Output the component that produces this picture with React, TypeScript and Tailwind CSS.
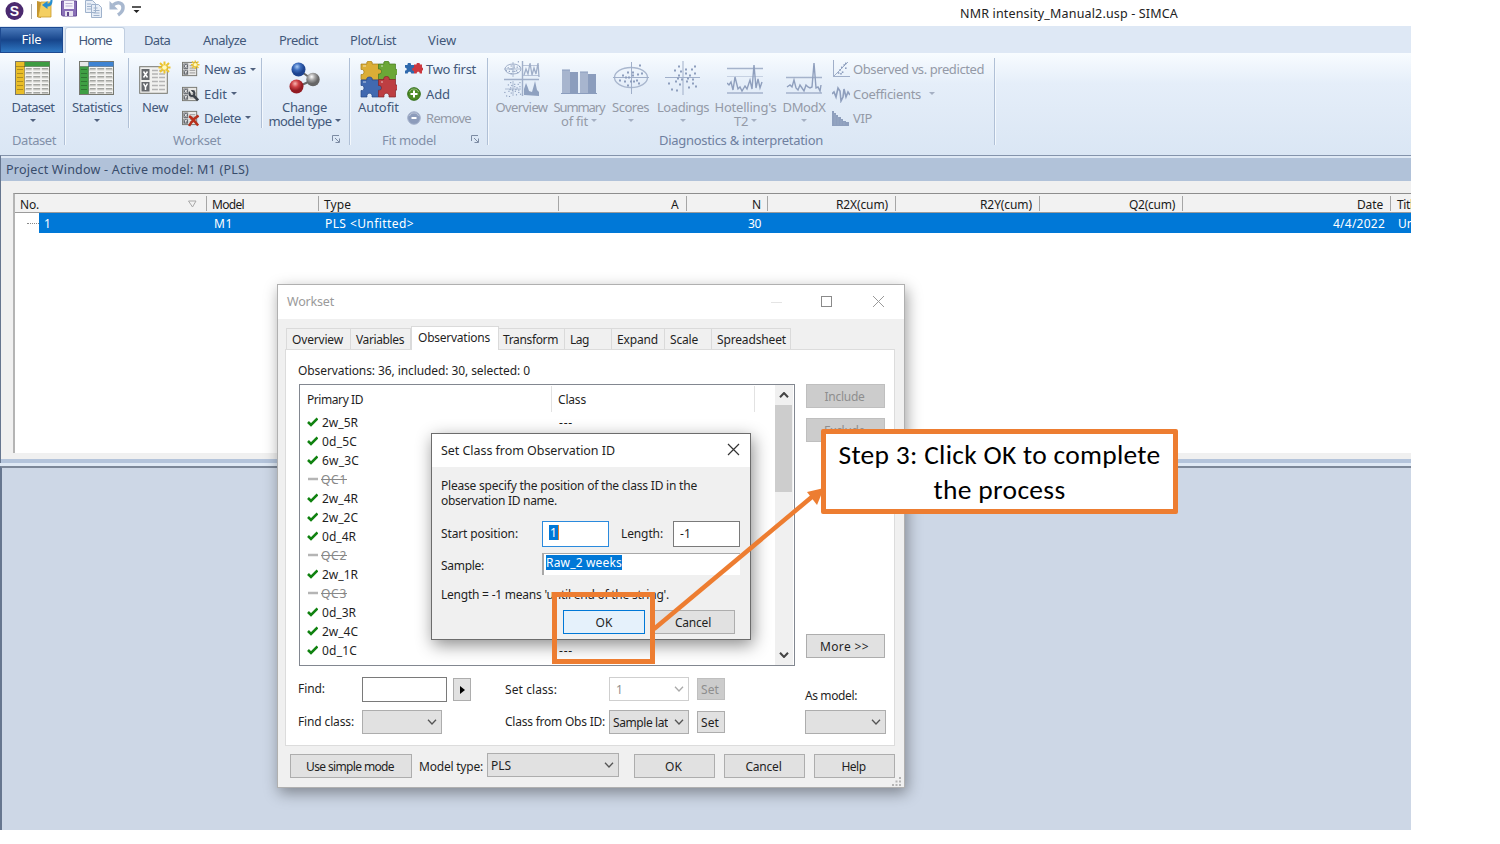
import { useLayoutEffect, useRef, useState } from "react";
import type { ReactNode } from "react";

/* One line of text whose tracking is adjusted to span `w` pixels. */
function T({ w, className = "", children }: { w: number; className?: string; children: string }) {
  const ref = useRef<HTMLSpanElement>(null);
  const [spacing, setSpacing] = useState(0);
  useLayoutEffect(() => {
    const el = ref.current!;
    el.style.letterSpacing = "0px";
    const natural = el.getBoundingClientRect().width;
    const next = (w - natural) / Math.max(1, children.length);
    el.style.letterSpacing = next + "px";
    setSpacing(next);
  }, [w, children]);
  return (
    <span ref={ref} className={"inline-block shrink-0 pt-[2px] whitespace-nowrap " + className} style={{ letterSpacing: spacing }}>
      {children}
    </span>
  );
}

/* ---------- ribbon icons ---------- */

function TableIcon({ side, top, corner }: { side: string; top: string; corner: string }) {
  return (
    <svg width="36" height="35" viewBox="0 0 36 35">
      <rect x="0.5" y="0.5" width="34" height="33" fill="#dcdcd8" stroke="#77786f" />
      {[6, 10, 14, 18, 22, 26, 30].map((y) => (
        <g key={y}>
          <path d={`M10 ${y + 0.5}H34`} stroke="#f7f7f5" strokeWidth="1.6" />
          <path d={`M11 ${y + 1.7}H33`} stroke="#a0a29e" strokeWidth="1.3" />
        </g>
      ))}
      <path d="M17.5 5V33M26 5V33" stroke="#f2f2f0" strokeWidth="1.6" />
      <rect x="1" y="1" width="8.5" height="32" fill={side} />
      <rect x="9.5" y="1" width="25" height="4.5" fill={top} />
      <rect x="1" y="1" width="8.5" height="4.5" fill={corner} />
      {[8, 12, 16, 20, 24, 28].map((y) => (
        <path key={y} d={`M2 ${y + 0.5}H8`} stroke="#00000040" />
      ))}
      <path d="M9.5 1V33M1 5.5H34" stroke="#00000040" />
    </svg>
  );
}

function Spark({ x, y, r }: { x: number; y: number; r: number }) {
  return (
    <g transform={`translate(${x} ${y}) scale(${r / 6})`}>
      <path d="M0-6V6M-6 0H6M-4.5-4.5L4.5 4.5M4.5-4.5L-4.5 4.5" stroke="#edc52e" strokeWidth="2" />
      <circle r="2.3" fill="#fff9bd" />
    </g>
  );
}

function NewIcon() {
  return (
    <svg width="32" height="34" viewBox="0 0 32 34">
      <rect x="0.7" y="5.7" width="27.6" height="26.6" fill="#f1f1ef" stroke="#77776f" />
      <rect x="2.5" y="8" width="8" height="11" fill="#66696d" />
      <rect x="2.5" y="21" width="8" height="9.5" fill="#66696d" />
      <path d="M4.5 10.5l4 6M8.5 10.5l-4 6M4.5 22.5l2 3.5 2-3.5M6.5 26v3" stroke="#fff" strokeWidth="1.5" fill="none" />
      <path d="M13 9.5H26M13 13H26M13 16.5H26M13 20.5H26M13 24.5H26M13 28.5H26" stroke="#b4b4b4" strokeWidth="1.7" />
      <path d="M19.5 7V31" stroke="#f1f1ef" strokeWidth="1.2" />
      <Spark x={25.5} y={6.5} r={6} />
    </svg>
  );
}

function MiniSheet({ kind }: { kind: "new" | "edit" | "delete" }) {
  return (
    <svg width="19" height="18" viewBox="0 0 19 18">
      <rect x="0.5" y="2" width="15" height="14" fill="#e9e9e7" stroke="#777770" />
      <rect x="1.5" y="3.200" width="5" height="5.700" fill="#65696f" />
      <rect x="1.5" y="9.700" width="5" height="5.300" fill="#65696f" />
      <path d="M2.800 4.300l2.500 3.500M5.300 4.300L2.800 7.800M2.800 10.500l1.200 2 1.300-2M4 12v2" stroke="#fff" strokeWidth="0.9" fill="none" />
      <path d="M8 5.5h6M8 8h6M8 10.5h6M8 13h6" stroke="#aaa" strokeWidth="1.3" />
      {kind === "new" && <Spark x={14} y={4.5} r={4.500} />}
      {kind === "edit" && (
        <g fill="none" stroke="#3d434b">
          <circle cx="10.500" cy="8.5" r="2.6" strokeWidth="2.2" />
          <path d="M12.200 10.600l4.800 5.200" strokeWidth="2.8" />
          <path d="M8 5l2.600 3" stroke="#e9e9e7" strokeWidth="2" />
        </g>
      )}
      {kind === "delete" && <path d="M7.500 7c3 2 6.500 6 9.500 10M17.500 6.500c-4 2.500-7.500 6-10 11" stroke="#b8301c" strokeWidth="2.600" fill="none" />}
    </svg>
  );
}

function MoleculeIcon() {
  return (
    <svg width="34" height="34" viewBox="0 0 34 34">
      <defs>
        <radialGradient id="mb" cx="0.4" cy="0.3"><stop offset="0" stopColor="#a9cbf5" /><stop offset="0.5" stopColor="#3d6dbd" /><stop offset="1" stopColor="#1d438f" /></radialGradient>
        <radialGradient id="mr" cx="0.4" cy="0.3"><stop offset="0" stopColor="#f7b5b1" /><stop offset="0.5" stopColor="#cf4246" /><stop offset="1" stopColor="#921b22" /></radialGradient>
        <radialGradient id="mg" cx="0.4" cy="0.3"><stop offset="0" stopColor="#fff" /><stop offset="0.5" stopColor="#a5a5a5" /><stop offset="1" stopColor="#666" /></radialGradient>
      </defs>
      <path d="M11 9l14 10M9 26l16-7" stroke="#666" strokeWidth="2" />
      <circle cx="10.500" cy="8.500" r="7" fill="url(#mb)" />
      <circle cx="8.500" cy="25.500" r="7" fill="url(#mr)" />
      <circle cx="25" cy="18.500" r="6.700" fill="url(#mg)" />
    </svg>
  );
}

function PuzzleIcon() {
  return (
    <svg width="37" height="37" viewBox="0 0 37 37">
      <path d="M1 3h6c-2-4 7-4 5 0h6.500v5c4-1 4 6 0 5v5.500H12c1 4-6 4-5 0H1v-5c4 1 4-6 0-5z" fill="#dbae37" stroke="#a47d1b" strokeWidth="0.7" />
      <path d="M18.500 3H24c-2-4 7-4 5 0h6.500v5.500c4-1 4 6 0 5v5H29c1 4-6 4-5 0h-5.500v-5.500c4 1 4-6 0-5z" fill="#6ba737" stroke="#45791e" strokeWidth="0.7" />
      <path d="M1 19h6c-2-4 7-4 5 0h6.500v5c4-1 4 6 0 5v7H12c1-5-6-5-5 0H1v-6.500c4 1 4-6 0-5z" fill="#4169b0" stroke="#254887" strokeWidth="0.7" />
      <path d="M18.500 18.500H24c-2-4 7-4 5 0h6.500V24c4-1 4 6 0 5v7H29c1-5-6-5-5 0h-5.500v-6.500c4 1 4-6 0-5z" fill="#bd3e42" stroke="#822327" strokeWidth="0.7" />
      <path d="M3 5h3M21 5h2M3 21h3M21 21h2" stroke="#ffffffaa" />
    </svg>
  );
}

function MiniPuzzle() {
  return (
    <svg width="18" height="12" viewBox="0 0 18 12">
      <path d="M0 2h2.500c-.7-3 4.200-3 3.500 0H9v8.500H6.200c.3-2.500-3.700-2.500-3.400 0H0V7.500c2.300 0 2.300-2.700 0-2.700z" fill="#2f69ad" />
      <path d="M9 1.500h2.500c-.3-2.500 3.700-2.500 3.400 0H17v3c2 .2 1.500 3 0 3v3h-2.300c.4-2.500-3.300-2.500-3 0H9V8C6.500 8 6.500 4.500 9 4.500z" fill="#cc383f" />
    </svg>
  );
}

function RoundSign({ minus }: { minus?: boolean }) {
  return (
    <svg width="14" height="14" viewBox="0 0 14 14">
      <circle cx="7" cy="7" r="6.300" fill={minus ? "#8d9cbb" : "#4c8b24"} stroke={minus ? "#a5b2cc" : "#2f6b16"} />
      <path d={minus ? "M4.500 7h5" : "M3.500 7h7M7 3.500v7"} stroke="#fff" strokeWidth="2" />
      <path d="M2.500 5c1-4 8-4 9 0" stroke="#ffffff66" fill="none" />
    </svg>
  );
}

const ink = "#a0afc9";

function dots(cx: number, cy: number, s: number, spread: number[][]) {
  return spread.map(([x, y], i) => <rect key={i} x={cx + x * s} y={cy + y * s} width={2 * s} height={2 * s} fill="#8d9ebd" />);
}
const cloud = [[-15, 5], [-12, 11], [-9, -8], [-8, 3], [-7, 12], [-5, -3], [-4, 6], [-3, -7], [-2, 1], [2, -5], [3, 3], [5, 9], [6, -3], [8, -9], [9, 5], [11, -12], [12, 8], [-5, -12], [2, -9], [-6, 0], [4, 0], [9, 1], [11, -5]];
const inner = [[-12, 2], [-9, -3], [-7, 3], [-4, -6], [-4, 7], [-3, -1], [2, 3], [1, -6], [1, -3], [5, 2], [6, -4], [7, 5], [10, -5], [-1, 3], [-6, -1], [8, -13]];

function OverviewIcon() {
  return (
    <svg width="36" height="36" viewBox="0 0 36 36">
      <path d="M0 18.500H35M18.500 0V35" stroke={ink} strokeWidth="1.400" />
      <ellipse cx="9" cy="8" rx="8" ry="5" stroke={ink} fill="none" />
      <path d="M0 8H17M9 1V16M9 20V35M1 28H17" stroke={ink} strokeWidth="0.800" />
      {dots(9, 8, 0.6, inner)}
      {dots(9, 28, 0.58, cloud)}
      <path d="M19 4.500H35M19 14.500H35" stroke={ink} strokeWidth="0.700" />
      <path d="M20 14l2-6 2 5 2-11 2 12 2-7 2 6 2-11 1 14" stroke={ink} fill="none" strokeWidth="1.300" />
      <path d="M20 34V28l2-6 2 5 1 3 3 1 2-7 1-4 2 9 2 2v4z" fill="#8fa1c0" />
    </svg>
  );
}

function BarsIcon() {
  return (
    <svg width="36" height="36" viewBox="0 0 36 36">
      <rect x="1" y="9" width="8" height="23" fill="#a7b5ce" />
      <rect x="9" y="11" width="8" height="21" fill="#8b9dbd" />
      <rect x="19" y="11" width="8" height="21" fill="#a7b5ce" />
      <rect x="27" y="13" width="8" height="19" fill="#8b9dbd" />
      <path d="M0 32.500H36M1 9H9M19 11H27" stroke="#8b9dbd" />
    </svg>
  );
}

function ScoresIcon() {
  return (
    <svg width="36" height="36" viewBox="0 0 36 36">
      <ellipse cx="18" cy="16.500" rx="16.500" ry="10" stroke="#a9b7ce" fill="none" strokeWidth="1.300" />
      <path d="M0 16.500H36M18.500 1V33" stroke={ink} />
      {dots(18, 16.5, 1, inner)}
    </svg>
  );
}

function LoadingsIcon() {
  return (
    <svg width="36" height="36" viewBox="0 0 36 36">
      <path d="M0 16.500H35M18 0V34" stroke={ink} />
      {dots(18, 16.5, 1, cloud)}
    </svg>
  );
}

function SpikeIcon({ modx }: { modx?: boolean }) {
  return (
    <svg width="37" height="36" viewBox="0 0 37 36">
      <path d={modx ? "M0 16.500H36M0 32H36" : "M0 7.500H36M0 32H36"} stroke="#a5b3cb" strokeWidth="1.300" />
      {!modx && <path d="M0 15.500H36" stroke="#c6d1e2" />}
      <path
        d={modx ? "M1 26l3-2 2 2 2-7 2 8 2 2 2-5 2 3 2 3 2-6 2 2 2 1 2-1 2-24 2 25 2-1 2 4 1-6" : "M0 22l2 2 2-3 2 8 2-13 3 12 2-2 2 4 3-5 2 3 3-9 2 9 2-24 2 23 2-9 2 9 2-6"}
        stroke="#8f9fbd" fill="none" strokeWidth="1.400"
      />
    </svg>
  );
}

function ObservedIcon() {
  return (
    <svg width="18" height="18" viewBox="0 0 18 18">
      <path d="M1.500 0V16.500H18M1 17L16 2" stroke={ink} fill="none" />
      {dots(9, 9, 0.8, [[-4, 4], [-2, 0], [0, -3], [3, -6], [5, -2], [1, 3], [5, -8], [-1, 5]])}
    </svg>
  );
}
function CoeffIcon() {
  return (
    <svg width="18" height="18" viewBox="0 0 18 18">
      <path d="M0 9l2-2 2 5 2-9 2 3 1 10 2-4 1-8 2 8 2-5 2 3" stroke="#8f9fbd" strokeWidth="1.600" fill="none" />
    </svg>
  );
}
function VipIcon() {
  return (
    <svg width="18" height="18" viewBox="0 0 18 18">
      <path d="M0 2h2v2h2v2h2v2h3v2h2v2h3v1h3v4H0z" fill="#8e9fbd" />
      <path d="M3 5v11M6 8v8M9 11v5M12 13v3" stroke="#9fafc9" strokeWidth="0.600" />
    </svg>
  );
}

function Launcher() {
  return (
    <svg width="9" height="9" viewBox="0 0 9 9" fill="none" stroke="#7c8ba3" className="-mt-[2px]">
      <path d="M0.500 6V0.500H7M3 3l4 4M7.500 3.500V7.500H3.500" />
    </svg>
  );
}

function Caret({ faint }: { faint?: boolean }) {
  return (
    <svg width="6" height="3" viewBox="0 0 6 3" className="shrink-0">
      <path d="M0 0H6L3 3z" fill={faint ? "#a5b0c3" : "#50617e"} />
    </svg>
  );
}

/* ---------- ribbon parts ---------- */

function Sep({ tall }: { tall?: boolean }) {
  return <div className={"mt-[5px] w-[2px] shrink-0 border-l border-r border-l-[#b0c0d6] border-r-[#f3f8fd] " + (tall ? "h-[87px]" : "h-[70px]")} />;
}

function BigButton({ box, icon, first, second, faint }: { box: string; icon: ReactNode; first: ReactNode; second?: ReactNode; faint?: boolean }) {
  return (
    <div className={"flex shrink-0 flex-col items-center pt-2 leading-[14px] " + box + (faint ? " text-[#949aa7]" : "")}>
      <div className="flex h-[38px] items-start">{icon}</div>
      <div className="flex h-[14px] items-center">{first}</div>
      <div className="flex h-[14px] items-center gap-[3px]">{second ?? null}</div>
    </div>
  );
}

function SmallRow({ icon, label, w, caret, faint, gap = "gap-[3px]" }: { icon: ReactNode; label: string; w: number; caret?: boolean; faint?: boolean; gap?: string }) {
  return (
    <div className={"flex h-[24.400px] items-center " + gap + (faint ? " text-[#949aa7]" : "")}>
      <div className="flex w-[18px] shrink-0 justify-center">{icon}</div>
      <T w={w}>{label}</T>
      {caret && <Caret faint={faint} />}
    </div>
  );
}

function Ribbon() {
  return (
    <div className="flex h-[102px] bg-linear-to-b from-[#f8fcff] via-[#e5eef9] via-30% to-[#dae6f4] text-[13px] text-[#42587a]">
      <div className="flex w-[64px] flex-col">
        <BigButton box="h-[80px] w-[66px]" icon={<TableIcon side="#e9bd28" top="#3c9c42" corner="#e9bd28" />} first={<T w={43}>Dataset</T>} second={<Caret />} />
        <div className="flex h-[14px] items-center pl-3 text-[#8290a9]"><T w={44}>Dataset</T></div>
      </div>
      <Sep tall />
      <div className="flex w-[283px] flex-col">
        <div className="flex h-[80px]">
          <BigButton box="w-[62px]" icon={<TableIcon side="#3f9f43" top="#3e83d2" corner="#e8e8e8" />} first={<T w={50}>Statistics</T>} second={<Caret />} />
          <Sep />
          <BigButton box="w-[50px]" icon={<NewIcon />} first={<T w={26}>New</T>} />
          <div className="flex w-[81px] flex-col pt-1 pl-[2px]">
            <SmallRow gap="gap-1" icon={<MiniSheet kind="new" />} label="New as" w={42} caret />
            <SmallRow gap="gap-1" icon={<MiniSheet kind="edit" />} label="Edit" w={23} caret />
            <SmallRow gap="gap-1" icon={<MiniSheet kind="delete" />} label="Delete" w={37} caret />
          </div>
          <Sep />
          <BigButton box="w-[83px]" icon={<MoleculeIcon />} first={<T w={45}>Change</T>} second={<><T w={63}>model type</T><Caret /></>} />
        </div>
        <div className="flex h-[14px] items-center justify-between pr-[8px] pl-[107px] text-[#8290a9]">
          <T w={48}>Workset</T>
          <Launcher />
        </div>
      </div>
      <Sep tall />
      <div className="flex w-[136px] flex-col">
        <div className="flex h-[80px]">
          <BigButton box="w-[55px]" icon={<PuzzleIcon />} first={<T w={41}>Autofit</T>} />
          <div className="-ml-px flex flex-col pt-1">
            <SmallRow icon={<MiniPuzzle />} label="Two first" w={50} />
            <SmallRow icon={<RoundSign />} label="Add" w={24} />
            <SmallRow icon={<RoundSign minus />} label="Remove" w={45} faint />
          </div>
        </div>
        <div className="flex h-[14px] items-center justify-between pr-[7px] pl-[31px] text-[#8290a9]">
          <T w={54}>Fit model</T>
          <Launcher />
        </div>
      </div>
      <Sep tall />
      <div className="flex w-[505px] flex-col">
        <div className="flex h-[80px]">
          <BigButton faint box="w-[65px]" icon={<OverviewIcon />} first={<T w={52}>Overview</T>} />
          <BigButton faint box="w-[50px]" icon={<BarsIcon />} first={<T w={51}>Summary</T>} second={<><T w={27}>of fit</T><Caret faint /></>} />
          <BigButton faint box="w-[53px]" icon={<ScoresIcon />} first={<T w={37}>Scores</T>} second={<Caret faint />} />
          <BigButton faint box="w-[52px]" icon={<LoadingsIcon />} first={<T w={52}>Loadings</T>} second={<Caret faint />} />
          <BigButton faint box="w-[73px]" icon={<SpikeIcon />} first={<T w={62}>Hotelling's</T>} second={<><T w={14}>T2</T><Caret faint /></>} />
          <BigButton faint box="w-[44px]" icon={<SpikeIcon modx />} first={<T w={43}>DModX</T>} second={<Caret faint />} />
          <div className="flex flex-col pt-1 pl-[6px]">
            <SmallRow faint icon={<ObservedIcon />} label="Observed vs. predicted" w={131} />
            <div className="flex items-center gap-2">
              <SmallRow faint icon={<CoeffIcon />} label="Coefficients" w={68} />
              <Caret faint />
            </div>
            <SmallRow faint icon={<VipIcon />} label="VIP" w={19} />
          </div>
        </div>
        <div className="flex h-[14px] items-center pl-[170px] text-[#6f80a0]"><T w={164}>Diagnostics &amp; interpretation</T></div>
      </div>
      <Sep tall />
    </div>
  );
}

function TitleBar() {
  return (
    <div className="flex h-[26px] w-[1500px] items-start bg-white">
      <div className="flex w-[960px] items-start pl-[5px]">
        <svg width="19" height="21" viewBox="0 0 19 21">
          <circle cx="9.500" cy="11" r="9" fill="#4b2a6f" />
          <text x="9.500" y="16" textAnchor="middle" fontSize="14" fontWeight="700" fill="#fff" fontFamily="Liberation Sans, sans-serif">S</text>
        </svg>
        <div className="mt-1 ml-[7px] h-[15px] w-px bg-[#aaa]" />
        <svg className="ml-[4px]" width="18" height="19" viewBox="0 0 18 19">
          <path d="M1 1l4 1v16l-4-1z" fill="#c39431" />
          <path d="M5 2h10v15H2z" fill="#f4cf61" stroke="#c99a2e" strokeWidth="0.800" />
          <path d="M16.500 0c0 5-2 6.500-5 6.500V9L6 5l5.500-4v2.500c2.500 0 3-2 3-3.500z" fill="#278ed0" />
        </svg>
        <svg className="ml-[7px]" width="16" height="18" viewBox="0 0 16 18">
          <path d="M0.500 1h15v15H1.500l-1-1z" fill="#8a70b7" stroke="#644a95" />
          <rect x="3" y="1" width="10" height="8" fill="#f5f2fa" />
          <path d="M4.500 3.500h7M4.500 6h7" stroke="#bbb0d2" />
          <rect x="4" y="11" width="8" height="5" fill="#e6e1ef" />
          <rect x="6" y="12" width="2" height="4" fill="#62488e" />
        </svg>
        <svg className="ml-[8px]" width="18" height="19" viewBox="0 0 18 19" stroke="#9fb2cc" fill="#e8eef7">
          <path d="M0.500 0.500h7l3 3v9h-10zM6.500 4.500h7l3 3v10h-10z" />
          <path d="M8.500 8h4M8.500 10.500h6M8.500 13h6M8.500 15.500h6M2 4h4M2 6.500h4M2 9h4" />
        </svg>
        <svg className="ml-[6px]" width="17" height="18" viewBox="0 0 17 18">
          <path d="M4 5c5-4 10.500-2 10 3 0 3-2 5-5 7" fill="none" stroke="#a8b8cf" strokeWidth="3.500" />
          <path d="M0.500 1v8.500h8.500z" fill="#a8b8cf" />
        </svg>
        <svg className="mt-[6px] ml-[6px]" width="9" height="8" viewBox="0 0 9 8"><path d="M0 1H9" stroke="#222" strokeWidth="1.500" /><path d="M1.500 4h6l-3 3z" fill="#222" /></svg>
      </div>
      <T w={218} className="pt-[5px]! text-[12.500px] leading-[18px] text-[#222]">NMR intensity_Manual2.usp - SIMCA</T>
    </div>
  );
}

function RibbonTabs() {
  return (
    <div className="flex h-[27px] items-end bg-[#dee8f5] text-[13px] text-[#42587a]">
      <div className="flex h-[26px] w-[63px] items-center justify-center border border-[#1d4a91] bg-linear-to-b from-[#4a7abb] via-[#17458b] via-50% to-[#2f77c2] text-white"><T w={20} className="pt-0!">File</T></div>
      <div className="ml-[2px] flex h-[26px] w-[60px] items-center justify-center rounded-t-[3px] border border-b-0 border-[#c0cee0] bg-[#fafdff]"><T w={33} className="pt-px!">Home</T></div>
      <div className="flex h-[26px] items-center pl-[19px]">
        <T w={26} className="mr-[33px]">Data</T>
        <T w={43} className="mr-[33px]">Analyze</T>
        <T w={39} className="mr-[32px]">Predict</T>
        <T w={46} className="mr-[32px]">Plot/List</T>
        <T w={28}>View</T>
      </div>
    </div>
  );
}

/* ---------- project window ---------- */

function HeadCell({ box, children }: { box: string; children: ReactNode }) {
  return <div className={"flex h-[15px] shrink-0 items-center border-r border-[#a6a6a6] " + box}>{children}</div>;
}

function ProjectWindow() {
  return (
    <div className="flex h-[308px] flex-col border-t border-l border-t-[#8493ab] border-l-[#66768f] bg-[#f0f0f0]">
      <div className="flex h-[25px] shrink-0 items-center border-t-2 border-[#dfe9f5] bg-[#b1c2d9] pl-[5px] text-[12.500px] text-[#384c6b]">
        <T w={243}>Project Window - Active model: M1 (PLS)</T>
      </div>
      <div className="mt-[12px] ml-[12px] flex h-[260px] shrink-0 flex-col overflow-hidden border-t border-l-2 border-t-[#8e8e8e] border-l-[#b4b4b4] bg-white text-[12px] text-[#1a1a1a]">
        <div className="flex h-[19px] shrink-0 items-center border-b border-[#9b9b9b] bg-[#f2f2f2] pt-[1px]">
          <HeadCell box="w-[192px] justify-between pr-[9px] pl-[5px]">
            <T w={19}>No.</T>
            <svg width="9" height="8" viewBox="0 0 9 8"><path d="M0.500 1H8L4.500 7z" fill="none" stroke="#a8a8a8" /></svg>
          </HeadCell>
          <HeadCell box="w-[112px] pl-[5px]"><T w={32}>Model</T></HeadCell>
          <HeadCell box="w-[240px] pl-[5px]"><T w={27}>Type</T></HeadCell>
          <HeadCell box="w-[128px] justify-end pr-[7px]"><T w={8}>A</T></HeadCell>
          <HeadCell box="w-[81px] justify-end pr-[7px]"><T w={8}>N</T></HeadCell>
          <HeadCell box="w-[128px] justify-end pr-[7px]"><T w={52}>R2X(cum)</T></HeadCell>
          <HeadCell box="w-[144px] justify-end pr-[7px]"><T w={52}>R2Y(cum)</T></HeadCell>
          <HeadCell box="w-[143px] justify-end pr-[7px]"><T w={46}>Q2(cum)</T></HeadCell>
          <HeadCell box="w-[208px] justify-end pr-[7px]"><T w={26}>Date</T></HeadCell>
          <div className="pl-[6px]"><T w={22}>Title</T></div>
        </div>
        <div className="flex h-[20px] shrink-0 items-center text-white">
          <div className="ml-[12px] w-[12px] shrink-0 border-t border-dotted border-[#888]" />
          <div className="flex h-[20px] min-w-0 flex-1 items-center bg-[#0078d7]">
            <div className="w-[175px] shrink-0 pl-[5px]"><T w={7}>1</T></div>
            <div className="w-[111px] shrink-0"><T w={19}>M1</T></div>
            <div className="w-[423px] shrink-0"><T w={89}>PLS &lt;Unfitted&gt;</T></div>
            <div className="w-[585px] shrink-0"><T w={13}>30</T></div>
            <div className="w-[65px] shrink-0"><T w={52}>4/4/2022</T></div>
            <T w={46}>Untitled</T>
          </div>
        </div>
      </div>
      <div className="mt-[6px] flex-1 bg-[#b4c4db]" />
    </div>
  );
}

/* ---------- dialog controls ---------- */

function Chevron({ up, tone = "#555" }: { up?: boolean; tone?: string }) {
  return (
    <svg width="10" height="6" viewBox="0 0 10 6" className="shrink-0">
      <path d={up ? "M1 5.300L5 1l4 4.300" : "M1 0.700L5 5l4-4.300"} stroke={tone} strokeWidth={tone === "#444" ? "2" : "1.3"} fill="none" />
    </svg>
  );
}

function Btn({ box, w, label, off }: { box: string; w: number; label: string; off?: boolean }) {
  return (
    <div className={"flex shrink-0 items-center justify-center border pr-[2px] " + box + (off ? " border-[#bfbfbf] bg-[#cccccc] text-[#8e8e8e]" : " border-[#adadad] bg-[#e1e1e1]")}>
      <T w={w}>{label}</T>
    </div>
  );
}

function Select({ box, children, off }: { box: string; children?: ReactNode; off?: boolean }) {
  return (
    <div className={"flex shrink-0 items-center justify-between border pr-[4px] pl-[3px] " + box + (off ? " border-[#cfcfcf] bg-white text-[#909090]" : " border-[#adadad] bg-[#e1e1e1]")}>
      <div className="overflow-hidden">{children}</div>
      <Chevron tone={off ? "#aaa" : "#555"} />
    </div>
  );
}

const rows: [string, number][] = [
  ["2w_5R", 36], ["0d_5C", 35], ["6w_3C", 37], ["QC1", 26], ["2w_4R", 36], ["2w_2C", 36], ["0d_4R", 34],
  ["QC2", 26], ["2w_1R", 36], ["QC3", 26], ["0d_3R", 34], ["2w_4C", 36], ["0d_1C", 35],
];

function ObservationList() {
  return (
    <div className="flex h-[282px] w-[496px] shrink-0 border border-[#828790] bg-white">
      <div className="flex flex-1 flex-col">
        <div className="flex h-[28px] shrink-0 pt-[1px]">
          <div className="flex h-[26px] w-[252px] items-center border-r border-[#e2e2e2] pl-[7px]"><T w={56}>Primary ID</T></div>
          <div className="flex h-[26px] w-[203px] items-center border-r border-[#e2e2e2] pl-[6px]"><T w={28}>Class</T></div>
        </div>
        {rows.map(([name, w]) => {
          const off = name.startsWith("QC");
          return (
            <div key={name} className="flex h-[19px] shrink-0 items-center pl-[7px]">
              <div className="flex w-[245px] items-center">
                <div className="w-[15px]">
                  {off ? (
                    <svg width="11" height="11" viewBox="0 0 11 11"><path d="M1 5H11" stroke="#b5b5b5" strokeWidth="2.500" /></svg>
                  ) : (
                    <svg width="11" height="11" viewBox="0 0 11 11"><path d="M1 5l3 3L10.500 1.500" stroke="#108210" strokeWidth="2.600" fill="none" /></svg>
                  )}
                </div>
                <T w={w} className={off ? "-ml-[1px] pt-px! text-[#888] line-through" : "pt-px!"}>{name}</T>
              </div>
              {!off && <div className="pl-[7px]"><T w={14} className="pt-0!">---</T></div>}
            </div>
          );
        })}
      </div>
      <div className="mr-[1px] flex w-[18px] shrink-0 flex-col bg-[#f0f0f0] pr-px">
        <div className="flex h-[20px] items-center justify-center"><Chevron up tone="#444" /></div>
        <div className="h-[87px] bg-[#cdcdcd]" />
        <div className="flex flex-1 items-end justify-center pb-[7px]"><Chevron tone="#444" /></div>
      </div>
    </div>
  );
}

function Tab({ box, w, label }: { box: string; w: number; label: string }) {
  return <div className={"flex h-[21px] shrink-0 items-center border-t border-r border-[#dadada] pl-[5px] " + box}><T w={w}>{label}</T></div>;
}

function WorksetDialog() {
  return (
    <div className="absolute top-[284px] left-[277px] flex h-[504px] w-[628px] flex-col border border-[#b0b0b0] bg-[#f0f0f0] text-[12px] text-[#1f1f1f] shadow-[2px_5px_14px_rgba(0,0,0,0.38)]">
      <div className="flex h-[34px] shrink-0 items-center bg-white pl-[9px] text-[12.500px] text-[#9a9a9a]">
        <T w={47} className="pt-px!">Workset</T>
        <div className="ml-[437px] h-px w-[11px] bg-[#e4e4e4]" />
        <div className="-mt-[2px] ml-[39px] h-[11px] w-[11px] border border-[#8a8a8a]" />
        <svg className="-mt-[2px] ml-[40px]" width="13" height="13" viewBox="0 0 13 13"><path d="M1 1l11 11M12 1L1 12" stroke="#999" /></svg>
      </div>
      <div className="mt-[7px] ml-[8px] flex h-[23px] shrink-0 items-end">
        <Tab box="w-[65px] border-l" w={51} label="Overview" />
        <Tab box="w-[60px]" w={48} label="Variables" />
        <div className="relative z-10 -mb-px flex h-[24px] w-[88px] shrink-0 items-center border border-b-0 border-[#dadada] bg-white pb-[3px] pl-[6px]"><T w={72}>Observations</T></div>
        <Tab box="w-[66px] pl-[4px]!" w={55} label="Transform" />
        <Tab box="w-[47px]" w={19} label="Lag" />
        <Tab box="w-[53px]" w={41} label="Expand" />
        <Tab box="w-[47px]" w={28} label="Scale" />
        <Tab box="w-[79px]" w={69} label="Spreadsheet" />
      </div>
      <div className="ml-[7px] flex h-[397px] w-[610px] shrink-0 flex-col border border-[#dcdcdc] bg-white pl-[12px]">
        <div className="flex h-[34px] shrink-0 items-center pt-[6px]"><T w={232}>Observations: 36, included: 30, selected: 0</T></div>
        <div className="ml-px flex shrink-0">
          <ObservationList />
          <div className="ml-[11px] flex flex-col">
            <Btn off box="h-[24px] w-[79px]" w={40} label="Include" />
            <Btn off box="mt-[10px] h-[24px] w-[79px]" w={41} label="Exclude" />
            <Btn box="mt-[192px] h-[24px] w-[79px]" w={49} label="More >>" />
          </div>
        </div>
        <div className="flex shrink-0 pt-[11px]">
          <div className="flex w-[207px] flex-col gap-[7px]">
            <div className="flex h-[25px] items-center">
              <div className="w-[64px] pb-[3px]"><T w={27}>Find:</T></div>
              <div className="h-[25px] w-[85px] border border-[#7a7a7a] bg-white" />
              <div className="ml-[6px] flex h-[23px] w-[18px] items-center justify-center border border-[#adadad] bg-[#e1e1e1]">
                <svg width="5" height="8" viewBox="0 0 5 8"><path d="M0 0v8l5-4z" fill="#000" /></svg>
              </div>
            </div>
            <div className="flex h-[25px] items-center">
              <div className="w-[64px] pb-px"><T w={56}>Find class:</T></div>
              <Select box="h-[24px] w-[80px]" />
            </div>
          </div>
          <div className="flex w-[300px] flex-col gap-[8px]">
            <div className="flex h-[24px] items-center">
              <div className="w-[104px] pb-px"><T w={52}>Set class:</T></div>
              <Select off box="h-[24px] w-[80px] pl-[6px]!"><T w={6}>1</T></Select>
              <Btn off box="ml-[8px] h-[22px] w-[28px]" w={18} label="Set" />
            </div>
            <div className="flex h-[25px] items-center">
              <div className="w-[104px] pb-px"><T w={100}>Class from Obs ID:</T></div>
              <Select box="h-[24px] w-[80px]"><T w={55}>Sample lat</T></Select>
              <Btn box="ml-[8px] h-[22px] w-[28px]" w={18} label="Set" />
            </div>
          </div>
          <div className="flex flex-col pt-[9px]">
            <div className="flex h-[18px] items-center"><T w={52}>As model:</T></div>
            <Select box="mt-[6px] h-[24px] w-[81px]" />
          </div>
        </div>
      </div>
      <div className="flex shrink-0 items-start pt-[7px] pl-[12px]">
        <Btn box="mt-[1px] h-[24px] w-[122px]" w={88} label="Use simple mode" />
        <div className="w-[75px] pt-[3px] pl-[7px]"><T w={64}>Model type:</T></div>
        <Select box="h-[24px] w-[132px]"><T w={20}>PLS</T></Select>
        <Btn box="mt-[1px] ml-[15px] h-[24px] w-[81px]" w={17} label="OK" />
        <Btn box="mt-[1px] ml-[9px] h-[24px] w-[81px]" w={36} label="Cancel" />
        <Btn box="mt-[1px] ml-[9px] h-[24px] w-[81px]" w={24} label="Help" />
      </div>
      <svg className="absolute right-[3px] bottom-[1px]" width="9" height="9" viewBox="0 0 9 9" fill="#b5b5b5">
        <path d="M7 0h2v2H7zM7 3.500h2v2H7zM7 7h2v2H7zM3.500 3.500h2v2h-2zM3.500 7h2v2h-2zM0 7h2v2H0z" />
      </svg>
    </div>
  );
}

function ClassDialog() {
  return (
    <div className="absolute top-[433px] left-[431px] flex h-[207px] w-[320px] flex-col border border-[#6c6c6c] bg-[#f0f0f0] text-[12px] text-[#1f1f1f] shadow-[2px_5px_16px_rgba(0,0,0,0.45)]">
      <div className="flex h-[33px] shrink-0 items-center justify-between bg-white pr-[10px] pl-[9px] text-[12.500px]">
        <T w={174} className="pt-px!">Set Class from Observation ID</T>
        <svg className="-mt-[2px]" width="13" height="13" viewBox="0 0 13 13"><path d="M1 1l11 11M12 1L1 12" stroke="#333" strokeWidth="1.200" /></svg>
      </div>
      <div className="flex flex-col items-start pt-[12px] pl-[9px] leading-[14.500px]">
        <T w={256} className="pt-0!">Please specify the position of the class ID in the</T>
        <T w={116} className="pt-0!">observation ID name.</T>
      </div>
      <div className="mt-[13px] flex h-[26px] shrink-0 items-center pl-[9px]">
        <div className="w-[101px] pb-[3px]"><T w={77}>Start position:</T></div>
        <div className="flex h-[26px] w-[67px] items-center border-[1.500px] border-[#2a8add] bg-white pb-[3px] pl-[6px] text-white">
          <span className="border-r border-[#e08030] bg-[#0078d7] px-px leading-[15px]">1</span>
        </div>
        <div className="w-[64px] pb-[3px] pl-[12px]"><T w={42}>Length:</T></div>
        <div className="flex h-[26px] w-[67px] items-center border border-[#7a7a7a] bg-white pb-[2px] pl-[6px]"><T w={11}>-1</T></div>
      </div>
      <div className="mt-[6px] flex h-[22px] shrink-0 items-center pl-[9px]">
        <div className="w-[101px] pt-px"><T w={43}>Sample:</T></div>
        <div className="flex h-[22px] w-[198px] items-start border-t border-l-2 border-[#a8a8a8] bg-white pt-px pl-[2px] text-white">
          <T w={76} className="bg-[#0078d7] pt-0! leading-[15px]">Raw_2 weeks</T>
        </div>
      </div>
      <div className="mt-[10px] flex h-[18px] shrink-0 items-center pl-[9px]"><T w={228}>Length = -1 means 'until end of the string'.</T></div>
      <div className="mt-[7px] flex pl-[131px]">
        <div className="flex h-[24px] w-[82px] items-center justify-center border-[1.500px] border-[#0078d7] bg-[#e5f1fb]"><T w={17}>OK</T></div>
        <Btn box="ml-[8px] h-[24px] w-[82px]" w={36} label="Cancel" />
      </div>
    </div>
  );
}

function Callout() {
  return (
    <>
      <div className="absolute top-[592px] left-[552px] h-[72px] w-[103px] border-[5px] border-[#ed7d31]" />
      <svg className="absolute top-[480px] left-[645px]" width="185" height="155" viewBox="0 0 185 155">
        <path d="M9 149L168 16" stroke="#ed7d31" strokeWidth="4.500" />
        <path d="M179 8L162 12L172 25z" fill="#ed7d31" />
      </svg>
      <div className="absolute top-[429px] left-[821px] flex h-[85px] w-[357px] flex-col items-center rounded-[2px] border-[5px] border-[#ed7d31] bg-white pt-[3px] font-['Carlito','Open_Sans',sans-serif] text-[27.500px] leading-[35px] text-black">
        <T w={322} className="pt-0!">Step 3: Click OK to complete</T>
        <T w={132} className="pt-0!">the process</T>
      </div>
    </>
  );
}

export default function App() {
  return (
    <div className="relative flex h-[844px] w-[1500px] flex-col overflow-hidden bg-white font-['Noto_Sans',sans-serif]">
      <TitleBar />
      <div className="flex h-[804px] w-[1411px] flex-col bg-[#dfe9f5]">
        <RibbonTabs />
        <Ribbon />
        <ProjectWindow />
        <div className="mt-[3px] flex-1 border-t-2 border-l-2 border-t-[#7c8798] border-l-[#66768f] bg-[#cdd7e6]" />
      </div>
      <WorksetDialog />
      <ClassDialog />
      <Callout />
    </div>
  );
}
